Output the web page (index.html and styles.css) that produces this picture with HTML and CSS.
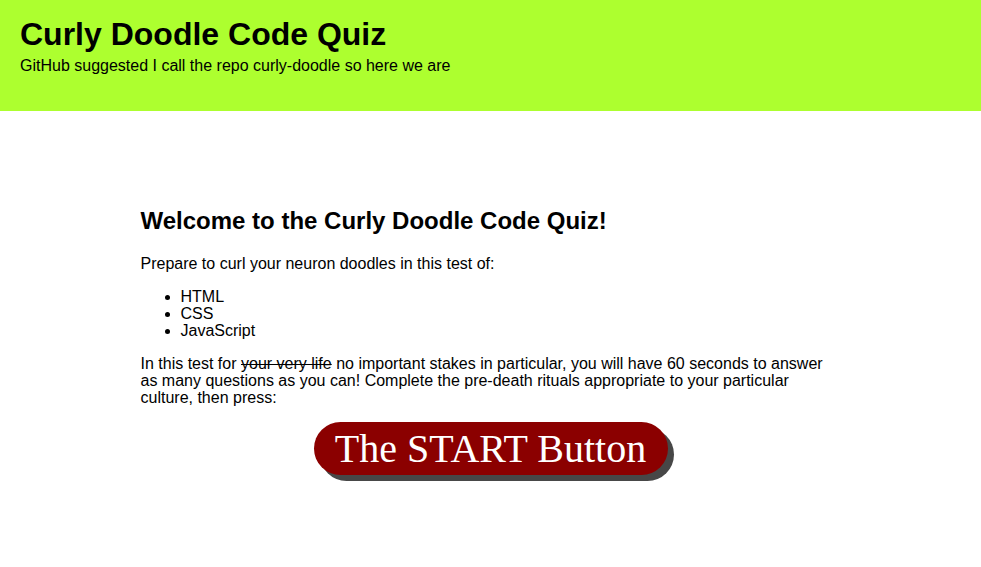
FILE: index.html
```html
<!DOCTYPE html>
<html>
<head>
<meta charset="utf-8">
<link rel="stylesheet" href="styles.css">
</head>
<body>
<header class="site-header">
  <h1 class="site-title">Curly Doodle Code Quiz</h1>
  <p class="site-tagline">GitHub suggested I call the repo curly-doodle so here we are</p>
</header>
<main class="intro">
  <h2 class="intro-title">Welcome to the Curly Doodle Code Quiz!</h2>
  <p class="intro-text">Prepare to curl your neuron doodles in this test of:</p>
  <ul class="topic-list">
    <li>HTML</li>
    <li>CSS</li>
    <li>JavaScript</li>
  </ul>
  <p class="intro-text">In this test for <s class="struck">your very life</s> no important stakes in particular, you will have 60 seconds to answer as many questions as you can! Complete the pre-death rituals appropriate to your particular culture, then press:</p>
  <div class="start-wrap">
    <button class="start-btn">The START Button</button>
  </div>
</main>
</body>
</html>
```
FILE: styles.css
```css
html, body {
  margin: 0;
  padding: 0;
  background: #fff;
  color: #000;
  font-family: "Liberation Sans", Arial, Helvetica, sans-serif;
}
.site-header {
  background: #adff2f;
  height: 111px;
  padding: 16px 20px 0;
  box-sizing: border-box;
}
.site-title {
  margin: 0;
  font-size: 32px;
  line-height: 37px;
  font-weight: bold;
}
.site-tagline {
  margin: 4px 0 0;
  font-size: 16px;
  line-height: 18px;
}
.intro {
  width: 700px;
  margin: 96px auto 0;
  padding-bottom: 60px;
  font-size: 16px;
  line-height: 17px;
}
.intro-title {
  margin: 0 0 20px;
  font-size: 24px;
  line-height: 28px;
  font-weight: bold;
}
.intro-text {
  margin: 0 0 16px;
}
.struck {
  text-decoration: line-through;
}
.topic-list {
  margin: 0 0 16px;
  padding-left: 40px;
}
.start-wrap {
  display: flex;
  justify-content: center;
  margin-top: 10px;
}
.start-btn {
  background: #8b0000;
  color: #fff;
  border: none;
  border-radius: 27px;
  width: 354px;
  height: 53px;
  padding: 0;
  font-family: "Liberation Serif", "Times New Roman", serif;
  font-size: 40px;
  line-height: 53px;
  box-shadow: 6px 6px 0 #474747;
  cursor: pointer;
}
```
